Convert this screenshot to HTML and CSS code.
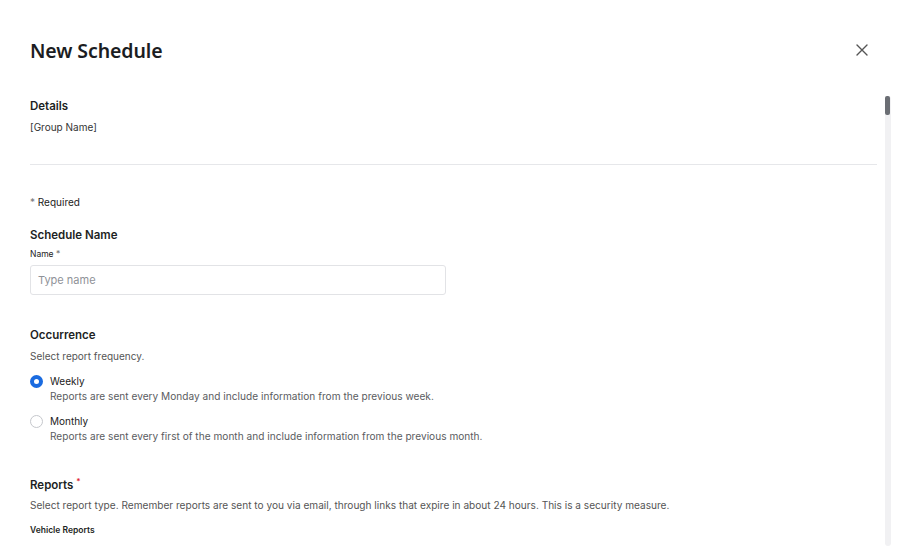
FILE: index.html
```html
<!DOCTYPE html>
<html>
<head>
<meta charset="utf-8">
<link rel="stylesheet" href="styles.css">
</head>
<body>
<div class="modal">
  <header class="modal-head">
    <h1 class="title">New Schedule</h1>
    <button class="close" aria-label="Close">
      <svg width="12" height="12" viewBox="0 0 12 12"><path d="M1 1L11 11M11 1L1 11" stroke="#555" stroke-width="1.4" stroke-linecap="round"/></svg>
    </button>
  </header>
  <div class="body">
    <div class="content">
      <section class="details">
        <h2 class="h">Details</h2>
        <p class="group">[Group Name]</p>
      </section>
      <hr class="divider">
      <p class="required"><span class="ast">*</span> Required</p>
      <section class="sec">
        <h2 class="h">Schedule Name</h2>
        <label class="label">Name <span class="ast">*</span></label>
        <div class="input">Type name</div>
      </section>
      <section class="sec occ">
        <h2 class="h">Occurrence</h2>
        <p class="desc">Select report frequency.</p>
        <div class="radio-row">
          <span class="radio checked"></span>
          <div>
            <div class="r-title">Weekly</div>
            <div class="r-desc">Reports are sent every Monday and include information from the previous week.</div>
          </div>
        </div>
        <div class="radio-row">
          <span class="radio"></span>
          <div>
            <div class="r-title">Monthly</div>
            <div class="r-desc">Reports are sent every first of the month and include information from the previous month.</div>
          </div>
        </div>
      </section>
      <section class="sec reports">
        <h2 class="h">Reports <sup class="red">*</sup></h2>
        <p class="desc wide">Select report type. Remember reports are sent to you via email, through links that expire in about 24 hours. This is a security measure.</p>
        <p class="sub">Vehicle Reports</p>
      </section>
    </div>
    <div class="scrollbar"><div class="thumb"></div></div>
  </div>
</div>
</body>
</html>
```
FILE: styles.css
```css
* { box-sizing: border-box; }
html, body { margin: 0; padding: 0; background: #fff; }
body { font-family: Inter, "Noto Sans", sans-serif; color: #1d1f24; width: 910px; height: 546px; overflow: hidden; }
.modal { padding: 0 0 0 30px; }
.modal-head { display: flex; justify-content: space-between; align-items: center; height: 99px; }
.title { font-family: "Noto Sans", sans-serif; font-size: 19.5px; font-weight: 600; margin: 0; letter-spacing: -0.1px; color: #1b1d22; position: relative; top: 1px; }
.close { border: 0; background: none; padding: 0; width: 12px; height: 12px; margin-right: 42px; position: relative; top: 0; display: flex; }
.body { display: flex; }
.content { width: 847px; }
.h { font-size: 11.5px; font-weight: 600; margin: 0; line-height: 14px; }
.details .group { font-size: 10px; margin: 8px 0 0; color: #333; line-height: 13px; }
.divider { border: 0; border-top: 1px solid #e6e7ea; margin: 30px 0 0; }
.required { font-size: 10px; margin: 31px 0 0; line-height: 13px; color: #222; }
.ast { color: #777; }
.sec { margin-top: 19px; }
.label { display: block; font-size: 8.5px; margin-top: 7px; line-height: 11px; color: #222; }
.input { width: 416px; height: 30px; border: 1px solid #e2e3e6; border-radius: 3px; margin-top: 5px; font-size: 11px; color: #8f9298; padding: 0 7px; display: flex; align-items: center; }
.occ { margin-top: 33px; }
.desc { font-size: 10px; color: #555; margin: 8px 0 0; line-height: 13px; }
.radio-row { display: flex; gap: 7px; margin-top: 12px; }
.radio-row + .radio-row { margin-top: 13px; }
.radio { width: 13px; height: 13px; border-radius: 50%; border: 1px solid #c5c7cc; flex: none; }
.radio.checked { border: 4.5px solid #1a6be0; background: #fff; }
.r-title { font-size: 10px; line-height: 12px; color: #222; }
.r-desc { font-size: 10.1px; line-height: 12px; color: #5a5c61; margin-top: 3px; letter-spacing: 0.02px; }
.reports { margin-top: 32px; }
.red { color: #d23; font-size: 8px; }
.wide { margin-top: 7px; font-size: 10.1px; }
.sub { font-size: 8.5px; font-weight: 600; margin: 13px 0 0; line-height: 11px; }
.scrollbar { width: 6px; margin-left: 8px; height: 450px; margin-top: -3px; background: #f1f1f3; border-radius: 3px; }
.thumb { width: 5px; height: 19px; background: #6b6e74; border-radius: 2px; }
```
